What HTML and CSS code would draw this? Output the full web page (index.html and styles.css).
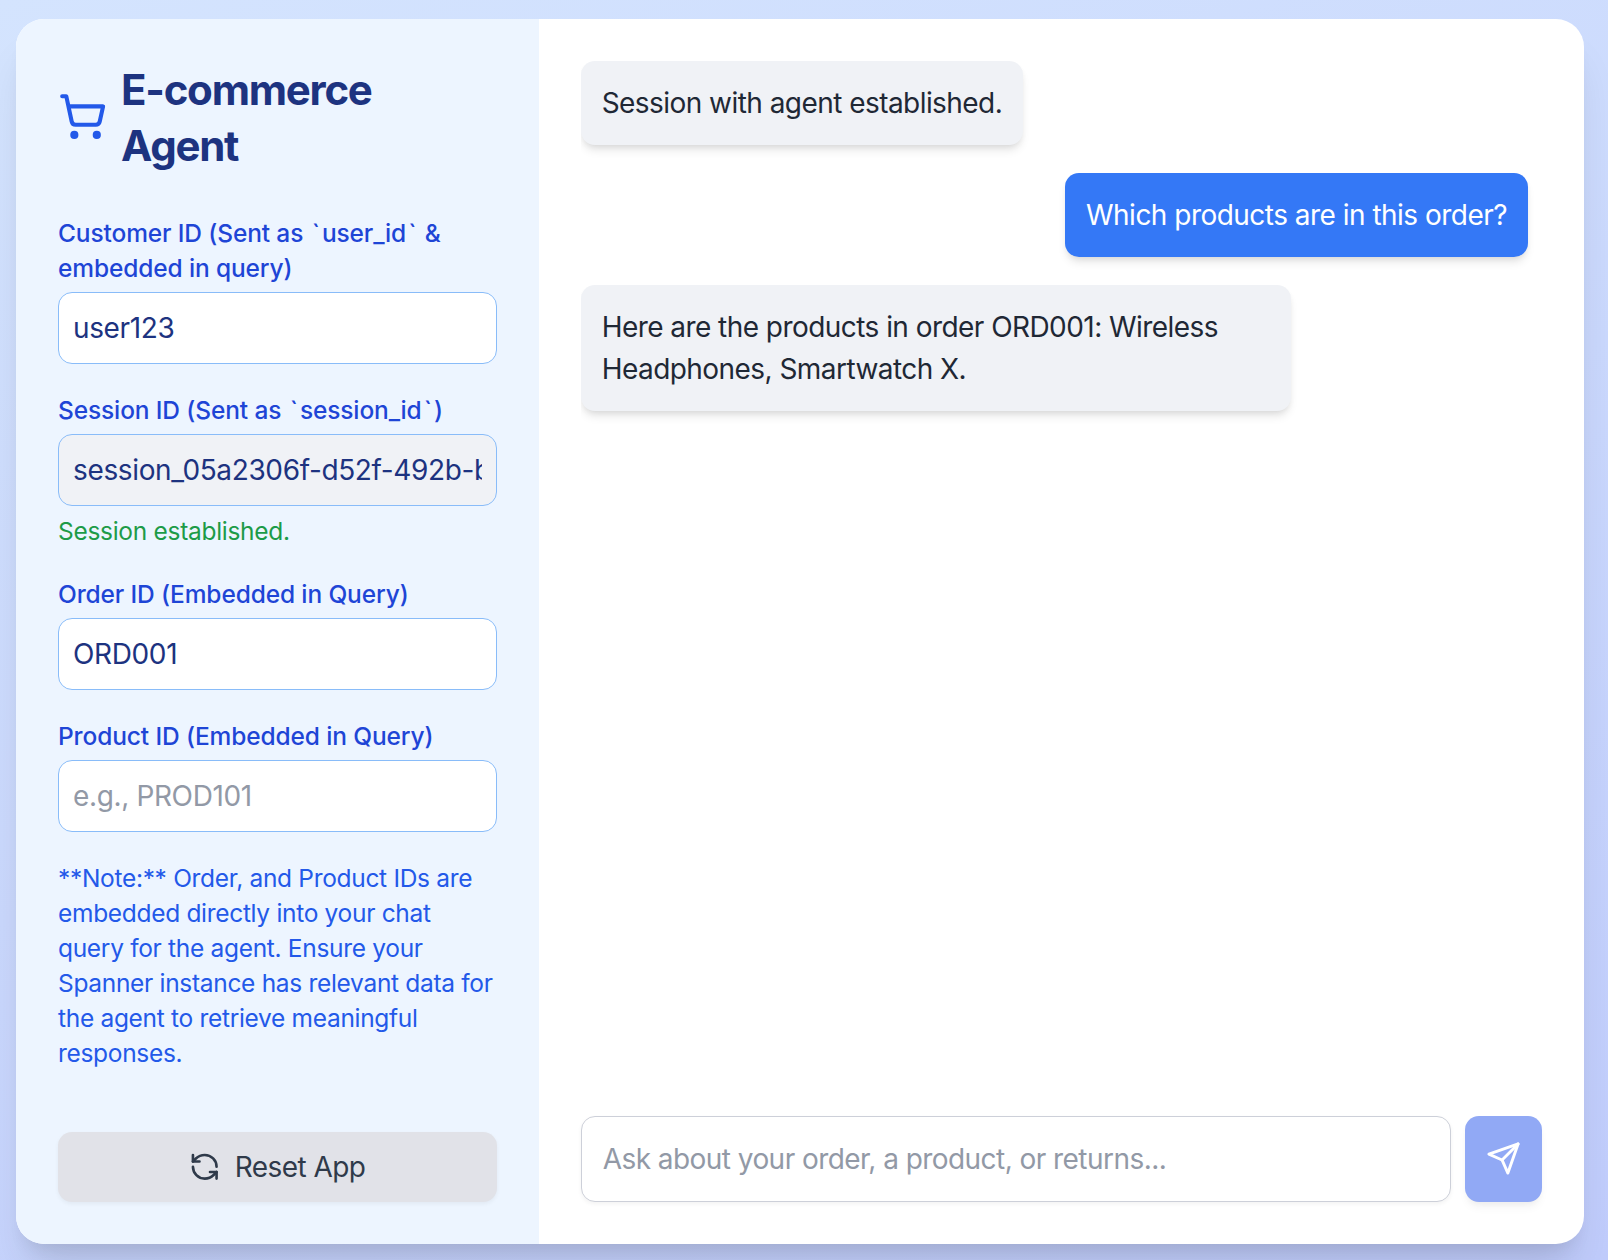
FILE: index.html
```html
<!DOCTYPE html>
<html lang="en">
<head>
<meta charset="utf-8">
<title>E-commerce Agent</title>
<link rel="stylesheet" href="styles.css">
</head>
<body>
<div class="app">
  <aside class="sidebar">
    <header class="brand">
      <svg class="brand-icon" viewBox="0 0 24 24" aria-hidden="true"><circle cx="8" cy="21" r="1"/><circle cx="19" cy="21" r="1"/><path d="M2.05 2.05h2l2.66 12.42a2 2 0 0 0 2 1.58h9.78a2 2 0 0 0 1.95-1.57l1.65-7.43H5.12"/></svg>
      <h1 class="brand-title">E-commerce Agent</h1>
    </header>
    <div class="fields">
      <div class="field">
        <label class="label" for="customer">Customer ID (Sent as <span class="tick">`</span>user_id<span class="tick">`</span> &amp; embedded in query)</label>
        <input class="input" id="customer" type="text" value="user123">
      </div>
      <div class="field">
        <label class="label" for="session">Session ID (Sent as <span class="tick">`</span>session_id<span class="tick">`</span>)</label>
        <input class="input input-readonly" id="session" type="text" value="session_05a2306f-d52f-492b-b" readonly>
        <p class="status">Session established.</p>
      </div>
      <div class="field">
        <label class="label" for="order">Order ID (Embedded in Query)</label>
        <input class="input" id="order" type="text" value="ORD001">
      </div>
      <div class="field">
        <label class="label" for="product">Product ID (Embedded in Query)</label>
        <input class="input" id="product" type="text" placeholder="e.g., PROD101">
      </div>
      <p class="note">**Note:** Order, and Product IDs are embedded directly into your chat query for the agent. Ensure your Spanner instance has relevant data for the agent to retrieve meaningful responses.</p>
    </div>
    <button class="reset" type="button">
      <svg class="reset-icon" viewBox="0 0 24 24" aria-hidden="true"><path d="M21 12a9 9 0 0 0-9-9 9.75 9.75 0 0 0-6.74 2.74L3 8"/><path d="M3 3v5h5"/><path d="M3 12a9 9 0 0 0 9 9 9.75 9.75 0 0 0 6.74-2.74L21 16"/><path d="M16 16h5v5"/></svg>
      <span>Reset App</span>
    </button>
  </aside>
  <main class="chat">
    <div class="messages">
      <div class="bubble bubble-agent">Session with agent established.</div>
      <div class="bubble bubble-user">Which products are in this order?</div>
      <div class="bubble bubble-agent">Here are the products in order ORD001: Wireless Headphones, Smartwatch X.</div>
    </div>
    <form class="composer">
      <input class="composer-input" type="text" placeholder="Ask about your order, a product, or returns...">
      <button class="send" type="button" aria-label="Send">
        <svg class="send-icon" viewBox="0 0 24 24" aria-hidden="true"><path d="m22 2-7 20-4-9-9-4Z"/><path d="M22 2 11 13"/></svg>
      </button>
    </form>
  </main>
</div>
</body>
</html>
```
FILE: styles.css
```css
html {
  font-size: 28px;
}

*,
*::before,
*::after {
  box-sizing: border-box;
}

body {
  margin: 0;
  height: 1260px;
  padding: 19px 24px 16px 16px;
  overflow: hidden;
  font-family: Inter, "Liberation Sans", sans-serif;
  font-size: 1rem;
  line-height: 1.5;
  letter-spacing: -0.55px;
  background: linear-gradient(160deg, #d4e4fe, #c0ccfc);
}

h1,
p {
  margin: 0;
}

svg {
  display: block;
  flex-shrink: 0;
  fill: none;
  stroke: currentColor;
  stroke-width: 2;
  stroke-linecap: round;
  stroke-linejoin: round;
}

input,
button {
  font: inherit;
  letter-spacing: inherit;
  outline: none;
}

.app {
  display: flex;
  height: 1225px;
  overflow: hidden;
  border-radius: 1rem;
  background: #fff;
  box-shadow: 0 35px 44px -9px rgba(0, 0, 0, 0.1), 0 14px 18px -10px rgba(0, 0, 0, 0.1);
}

.sidebar {
  display: flex;
  flex-direction: column;
  justify-content: space-between;
  width: 33.3333%;
  padding: 1.5rem;
  background: #edf5ff;
}

.brand {
  display: flex;
  align-items: center;
  gap: 0.5rem;
  margin-bottom: 1.5rem;
}

.brand-icon {
  width: 1.75rem;
  height: 1.75rem;
  margin-bottom: 2px;
  color: #2359e9;
}

.brand-title {
  padding-top: 1px;
  margin-bottom: -1px;
  font-size: 1.5rem;
  line-height: 2rem;
  font-weight: 700;
  letter-spacing: -1.25px;
  color: #1d3380;
}

.fields {
  display: flex;
  flex: 1;
  flex-direction: column;
  gap: 1rem;
}

.field {
  display: flex;
  flex-direction: column;
  gap: 0.25rem;
}

.label,
.status,
.note {
  padding-top: 1px;
  margin-bottom: -1px;
  font-size: 0.875rem;
  line-height: 1.25rem;
  letter-spacing: -0.29px;
}

.label {
  font-weight: 500;
  letter-spacing: -0.13px;
  color: #1e45d6;
}

.tick {
  margin-left: 2px;
  letter-spacing: 2px;
}

.status {
  color: #1d9b48;
}

.note {
  letter-spacing: -0.31px;
  color: #2359e9;
}

.input {
  width: 100%;
  height: 72px;
  padding: 0.5rem;
  border: 1px solid #89bcf9;
  border-radius: 0.5rem;
  background: #fff;
  color: #1d3380;
  letter-spacing: -0.36px;
}

.input-readonly {
  background: #f0f2f6;
}

.input::placeholder,
.composer-input::placeholder {
  color: #9299a6;
  opacity: 1;
}

.reset {
  display: flex;
  align-items: center;
  justify-content: center;
  gap: 0.5rem;
  height: 2.5rem;
  padding: 0.5rem;
  border: 0;
  border-radius: 0.5rem;
  background: #e1e2e8;
  color: #2f3a4a;
  box-shadow: 0 2px 4px rgba(0, 0, 0, 0.05);
}

.reset-icon {
  width: 1.125rem;
  height: 1.125rem;
}

.chat {
  display: flex;
  flex: 1;
  flex-direction: column;
  min-width: 0;
  padding: 1.5rem;
}

.messages {
  display: flex;
  flex: 1;
  flex-direction: column;
  gap: 1rem;
  padding-right: 0.5rem;
  overflow: hidden;
}

.bubble {
  max-width: 75%;
  padding: 0.75rem;
  border-radius: 0.5rem;
  box-shadow: 0 7px 10px -2px rgba(0, 0, 0, 0.1), 0 3px 7px -3px rgba(0, 0, 0, 0.1);
}

.bubble-agent {
  align-self: flex-start;
  background: #f0f2f6;
  color: #1f2835;
}

.bubble-user {
  align-self: flex-end;
  background: #3478f6;
  color: #fff;
  letter-spacing: -0.52px;
}

.composer {
  display: flex;
  gap: 0.5rem;
  margin: 0;
}

.composer-input {
  flex: 1;
  min-width: 0;
  height: 86px;
  padding: 0.75rem;
  border: 1px solid #cdd0d9;
  border-radius: 0.5rem;
  background: #fff;
  color: #1f2835;
  box-shadow: 0 2px 4px rgba(0, 0, 0, 0.05);
}

.send {
  display: flex;
  align-items: center;
  justify-content: center;
  width: 77px;
  padding: 0;
  border: 0;
  border-radius: 0.5rem;
  background: #91a9f5;
  color: #fff;
  box-shadow: 0 7px 10px -2px rgba(0, 0, 0, 0.05), 0 3px 7px -3px rgba(0, 0, 0, 0.05);
}

.send-icon {
  width: 1.25rem;
  height: 1.25rem;
  margin-bottom: 2px;
}
```
